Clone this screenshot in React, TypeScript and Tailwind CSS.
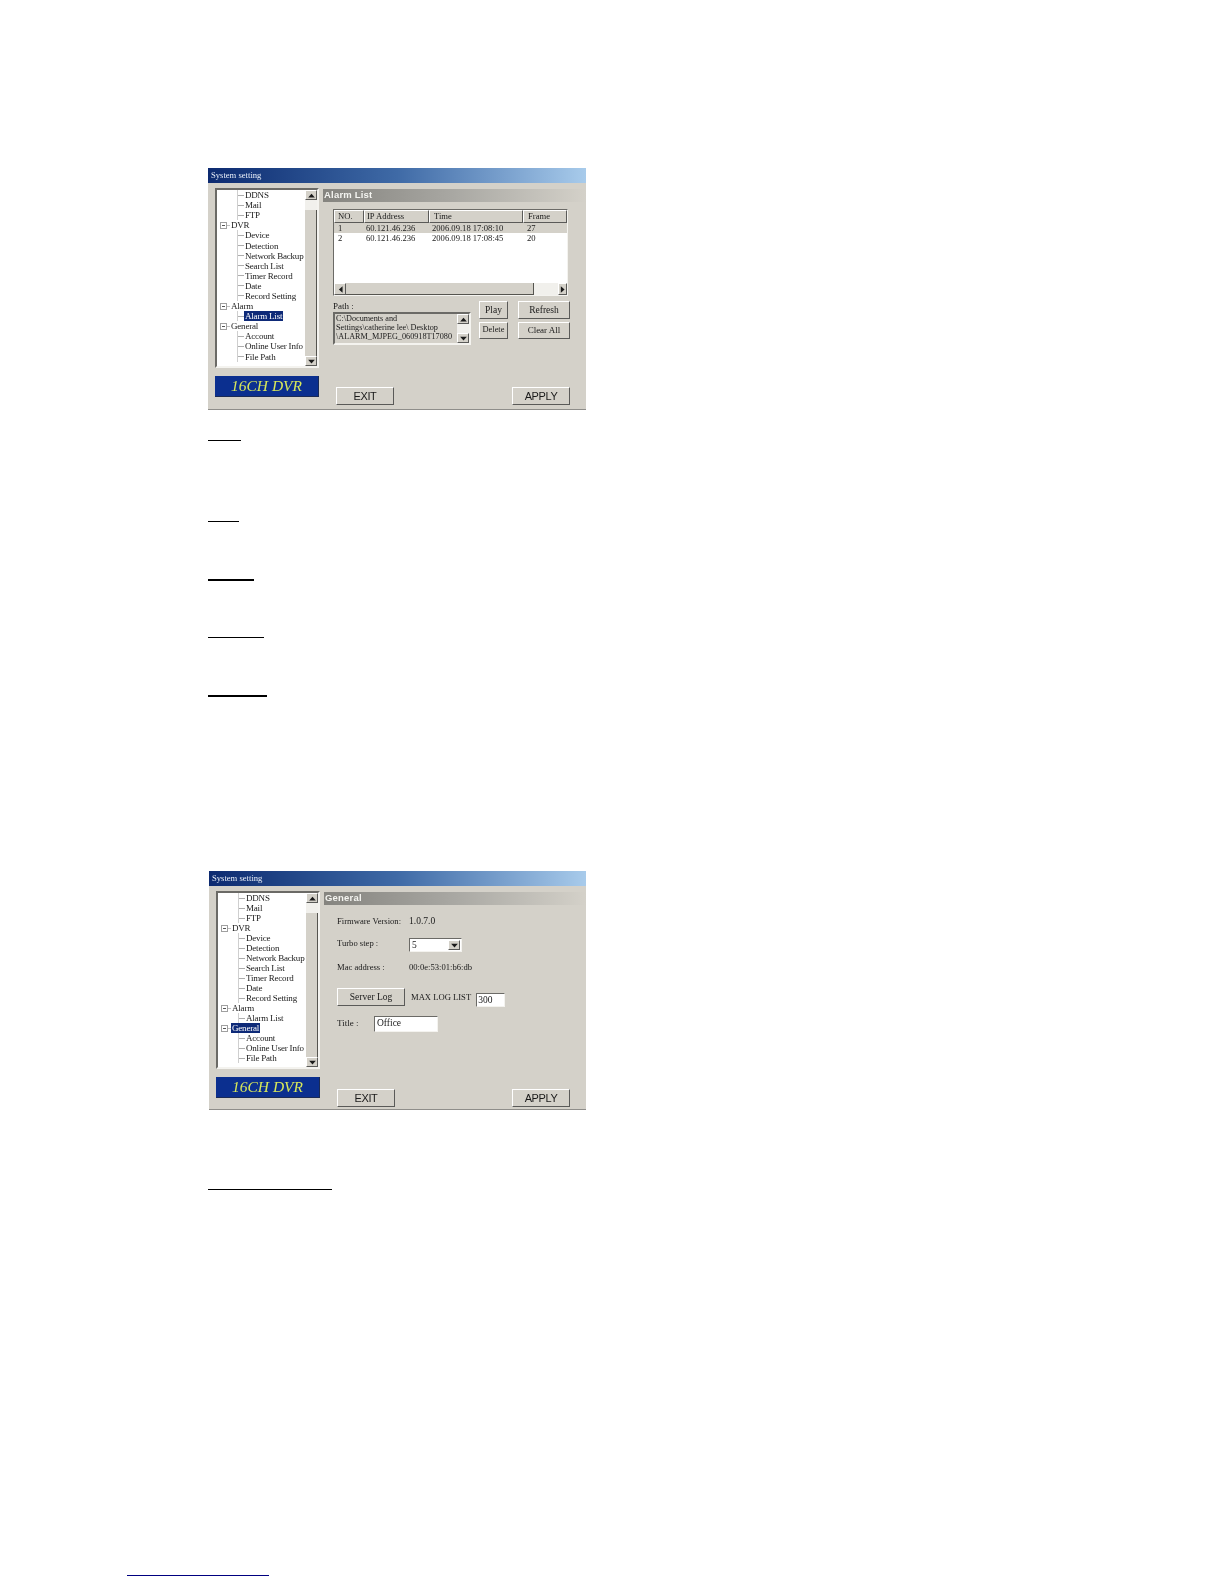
import React from "react";

const bevelOut = "border border-t-white border-l-white border-b-[#5a5a58] border-r-[#5a5a58] bg-[#d4d1c9]";
const bevelIn = "border border-t-[#6b6a66] border-l-[#6b6a66] border-b-[#f4f3ef] border-r-[#f4f3ef]";
const serif = "font-['Liberation_Serif',serif]";
const sans = "font-['Liberation_Sans',Arial,sans-serif]";

function Arrow({ dir }: { dir: "up" | "down" | "left" | "right" }) {
  const pts = { up: "4,1 8,5.5 0,5.5", down: "0,1 8,1 4,5.5", left: "5.5,0 5.5,8 1,4", right: "1,0 1,8 5.5,4" }[dir];
  const box = dir === "up" || dir === "down" ? "0 0 8 6" : "0 0 6 8";
  return (
    <svg viewBox={box} className={dir === "up" || dir === "down" ? "w-[7px] h-[5px]" : "w-[5px] h-[7px]"}>
      <polygon points={pts} fill="#1a1a1a" />
    </svg>
  );
}

function SmallBtn({ dir, cls }: { dir: "up" | "down" | "left" | "right"; cls: string }) {
  return <div className={`${bevelOut} ${cls} shrink-0 flex items-center justify-center`}><Arrow dir={dir} /></div>;
}

type Row = { t: string; l: 1 | 2 };
const rows: Row[] = [
  { t: "DDNS", l: 2 }, { t: "Mail", l: 2 }, { t: "FTP", l: 2 }, { t: "DVR", l: 1 },
  { t: "Device", l: 2 }, { t: "Detection", l: 2 }, { t: "Network Backup", l: 2 }, { t: "Search List", l: 2 },
  { t: "Timer Record", l: 2 }, { t: "Date", l: 2 }, { t: "Record Setting", l: 2 }, { t: "Alarm", l: 1 },
  { t: "Alarm List", l: 2 }, { t: "General", l: 1 }, { t: "Account", l: 2 }, { t: "Online User Info", l: 2 }, { t: "File Path", l: 2 },
];

function TreeRow({ row, selected, rowCls }: { row: Row; selected: string; rowCls: string }) {
  const sel = row.t === selected;
  const label = (
    <span className={sel ? "bg-[#0e2a78] text-white px-[1px] leading-[10px]" : "px-[1px] leading-[10px]"}>{row.t}</span>
  );
  if (row.l === 1) {
    return (
      <div className={`flex items-center ${rowCls}`}>
        <span className="ml-[3px] w-[7px] h-[7px] border border-[#a0a0a0] bg-white flex items-center justify-center shrink-0">
          <span className="w-[3px] h-px bg-[#555]" />
        </span>
        <span className="w-[3px] h-px bg-[#c0c0c0] shrink-0" />
        {label}
      </div>
    );
  }
  return (
    <div className={`flex items-center ${rowCls}`}>
      <span className="ml-[20px] w-[7px] h-full border-l border-[#cfcfcf] flex items-center shrink-0">
        <span className="w-full h-px bg-[#adadad]" />
      </span>
      {label}
    </div>
  );
}

function Tree({ selected, cls, rowCls }: { selected: string; cls: string; rowCls: string }) {
  return (
    <div className={`${bevelIn} border-2 w-[104px] ${cls} bg-white flex ${serif} text-[9px] tracking-[-0.2px] text-[#1a1a1a] whitespace-nowrap`}>
      <div className="flex-1 min-w-0">
        {rows.map((r) => <TreeRow key={r.t} row={r} selected={selected} rowCls={rowCls} />)}
      </div>
      <div className="w-[12px] flex flex-col shrink-0">
        <SmallBtn dir="up" cls="w-[12px] h-[10px]" />
        <div className="h-[10px] bg-[#f1f0ec]" />
        <div className="flex-1 bg-[#d4d1c9] border-r border-[#55544f]" />
        <SmallBtn dir="down" cls="w-[12px] h-[10px]" />
      </div>
    </div>
  );
}

function Btn({ children, cls }: { children: React.ReactNode; cls: string }) {
  return <div className={`${bevelOut} ${cls} flex items-center justify-center text-[#1a1a1a]`}>{children}</div>;
}

function Window({ cls, selected, heading, treeCls, rowCls, footCls, children }: {
  cls: string; selected: string; heading: string; treeCls: string; rowCls: string; footCls: string; children: React.ReactNode;
}) {
  return (
    <div className={`${cls} bg-[#d4d1c9] flex flex-col border-b border-[#8f8e8a] blur-[0.35px]`}>
      <div className={`h-[15px] shrink-0 bg-gradient-to-r from-[#0d2a70] via-[#3f6aa6] to-[#a8cbeb] pl-[3px] flex items-center text-[8.6px] text-[#e8eef8] ${serif}`}>
        System setting
      </div>
      <div className="flex-1 flex min-h-0">
        <div className="pl-[7px] pt-[5px] shrink-0">
          <Tree selected={selected} cls={treeCls} rowCls={rowCls} />
          <div className={`mt-[8px] w-[104px] h-[21px] bg-[#0b2f8f] flex items-center justify-center italic text-[15.5px] text-[#d8e85a] ${serif} border-b border-r border-[#1a2a55]`}>
            16CH DVR
          </div>
        </div>
        <div className="flex-1 min-w-0 ml-[4px] pt-[6px] flex flex-col">
          <div className={`h-[13px] shrink-0 bg-gradient-to-r from-[#85847f] via-[#a9a8a3] to-[#d4d1c9] flex items-center pl-[1px] text-[9.5px] font-bold text-[#f4f4f0] tracking-[0.2px] ${sans}`}>
            {heading}
          </div>
          <div className="flex-1 min-h-0">{children}</div>
          <div className={`flex justify-between pl-[13px] pr-[16px] ${footCls} ${sans} text-[11px] tracking-[-0.4px]`}>
            <Btn cls="w-[58px] h-[18px]">EXIT</Btn>
            <Btn cls="w-[58px] h-[18px]">APPLY</Btn>
          </div>
        </div>
      </div>
    </div>
  );
}

const listRows = [
  ["1", "60.121.46.236", "2006.09.18 17:08:10", "27"],
  ["2", "60.121.46.236", "2006.09.18 17:08:45", "20"],
];

function AlarmPanel() {
  return (
    <div className={`pl-[10px] pt-[7px] ${serif} text-[8.6px] text-[#1a1a1a] whitespace-nowrap`}>
      <div className={`${bevelIn} w-[235px] h-[87px] bg-white flex flex-col`}>
        <div className="h-[13px] flex shrink-0">
          <div className={`${bevelOut} w-[30px] pl-[3px] leading-[11px]`}>NO.</div>
          <div className={`${bevelOut} w-[65px] pl-[2px] leading-[11px]`}>IP Address</div>
          <div className={`${bevelOut} w-[94px] pl-[4px] leading-[11px]`}>Time</div>
          <div className={`${bevelOut} flex-1 pl-[4px] leading-[11px]`}>Frame</div>
        </div>
        <div className="flex-1">
          {listRows.map((r, i) => (
            <div key={r[0]} className={`h-[10px] flex items-center leading-[10px] ${i === 0 ? "bg-[#d4d1c9]" : ""}`}>
              <span className="w-[32px] pl-[4px]">{r[0]}</span>
              <span className="w-[66px]">{r[1]}</span>
              <span className="w-[95px]">{r[2]}</span>
              <span>{r[3]}</span>
            </div>
          ))}
        </div>
        <div className="h-[12px] flex shrink-0">
          <SmallBtn dir="left" cls="w-[12px] h-[12px]" />
          <div className="w-[188px] bg-[#d4d1c9] border-b border-r border-[#55544f]" />
          <div className="flex-1 bg-[#f1f0ec]" />
          <SmallBtn dir="right" cls="w-[9px] h-[12px]" />
        </div>
      </div>
      <div className="flex mt-[5px]">
        <div className="w-[138px] shrink-0">
          <div className="leading-[10px] text-[9px]">Path :</div>
          <div className={`${bevelIn} border-2 mt-[1px] h-[33px] flex bg-[#d4d1c9]`}>
            <div className="flex-1 min-w-0 pl-[1px] text-[8.2px] leading-[9px] overflow-hidden">
              <div>C:\Documents and</div>
              <div>Settings\catherine lee\ Desktop</div>
              <div>\ALARM_MJPEG_060918T17080</div>
            </div>
            <div className="w-[12px] flex flex-col shrink-0 bg-[#f1f0ec]">
              <SmallBtn dir="up" cls="w-[12px] h-[10px]" />
              <div className="flex-1" />
              <SmallBtn dir="down" cls="w-[12px] h-[10px]" />
            </div>
          </div>
        </div>
        <div className="ml-[8px] flex flex-col gap-[3px]">
          <Btn cls="w-[29px] h-[18px] text-[9.5px]">Play</Btn>
          <Btn cls="w-[29px] h-[17px] text-[8.4px]">Delete</Btn>
        </div>
        <div className="ml-[10px] flex flex-col gap-[3px]">
          <Btn cls="w-[52px] h-[18px] text-[9.5px]">Refresh</Btn>
          <Btn cls="w-[52px] h-[17px] text-[9px]">Clear All</Btn>
        </div>
      </div>
    </div>
  );
}

function GeneralPanel() {
  return (
    <div className={`pl-[13px] pt-[10px] ${serif} text-[8.6px] text-[#1a1a1a] whitespace-nowrap flex flex-col`}>
      <div className="flex h-[12px] items-center">
        <span className="w-[72px]">Firmware Version:</span><span className="text-[9.5px]">1.0.7.0</span>
      </div>
      <div className="flex mt-[11px] h-[14px]">
        <span className="w-[72px] leading-[11px]">Turbo step :</span>
        <div className={`${bevelIn} w-[53px] h-[14px] bg-white flex items-center justify-between pl-[2px] pr-[1px]`}>
          <span className="text-[9.5px]">5</span>
          <SmallBtn dir="down" cls="w-[12px] h-[10px]" />
        </div>
      </div>
      <div className="flex mt-[9px] h-[12px] items-center">
        <span className="w-[72px]">Mac address :</span><span>00:0e:53:01:b6:db</span>
      </div>
      <div className="flex mt-[15px] h-[18px]">
        <Btn cls="w-[68px] h-[18px] text-[9.5px]">Server Log</Btn>
        <span className="ml-[6px] text-[8.6px] leading-[14px] mt-[2px]">MAX LOG LIST</span>
        <div className={`${bevelIn} ml-[5px] mt-[5px] w-[29px] h-[14px] bg-white pl-[1px] text-[9.5px] leading-[12px]`}>300</div>
      </div>
      <div className="flex mt-[10px] items-center h-[15px]">
        <span className="w-[37px] text-[9px]">Title :</span>
        <div className={`${bevelIn} w-[64px] h-[16px] bg-white pl-[2px] text-[9.5px] leading-[12px]`}>Office</div>
      </div>
    </div>
  );
}

export default function App() {
  return (
    <div className="w-[1224px] h-[1584px] bg-white pt-[168px] overflow-hidden">
      <Window cls="ml-[208px] w-[378px] h-[242px]" heading="Alarm List" selected="Alarm List" treeCls="h-[180px]" rowCls="h-[10.1px]" footCls="pb-[4px]">
        <AlarmPanel />
      </Window>
      <div className="ml-[208px] mt-[30px] w-[33px] h-px bg-black" />
      <div className="ml-[208px] mt-[80px] w-[31px] h-px bg-black" />
      <div className="ml-[208px] mt-[57px] w-[46px] h-[2px] bg-black" />
      <div className="ml-[208px] mt-[56px] w-[56px] h-px bg-black" />
      <div className="ml-[208px] mt-[57px] w-[59px] h-[2px] bg-black" />
      <Window cls="ml-[209px] mt-[174px] w-[377px] h-[239px]" heading="General" selected="General" treeCls="h-[178px]" rowCls="h-[10px]" footCls="pb-[2px]">
        <GeneralPanel />
      </Window>
      <div className="ml-[208px] mt-[79px] w-[124px] h-px bg-black" />
      <div className="ml-[127px] mt-[385px] w-[142px] h-px bg-[#000080]" />
    </div>
  );
}
